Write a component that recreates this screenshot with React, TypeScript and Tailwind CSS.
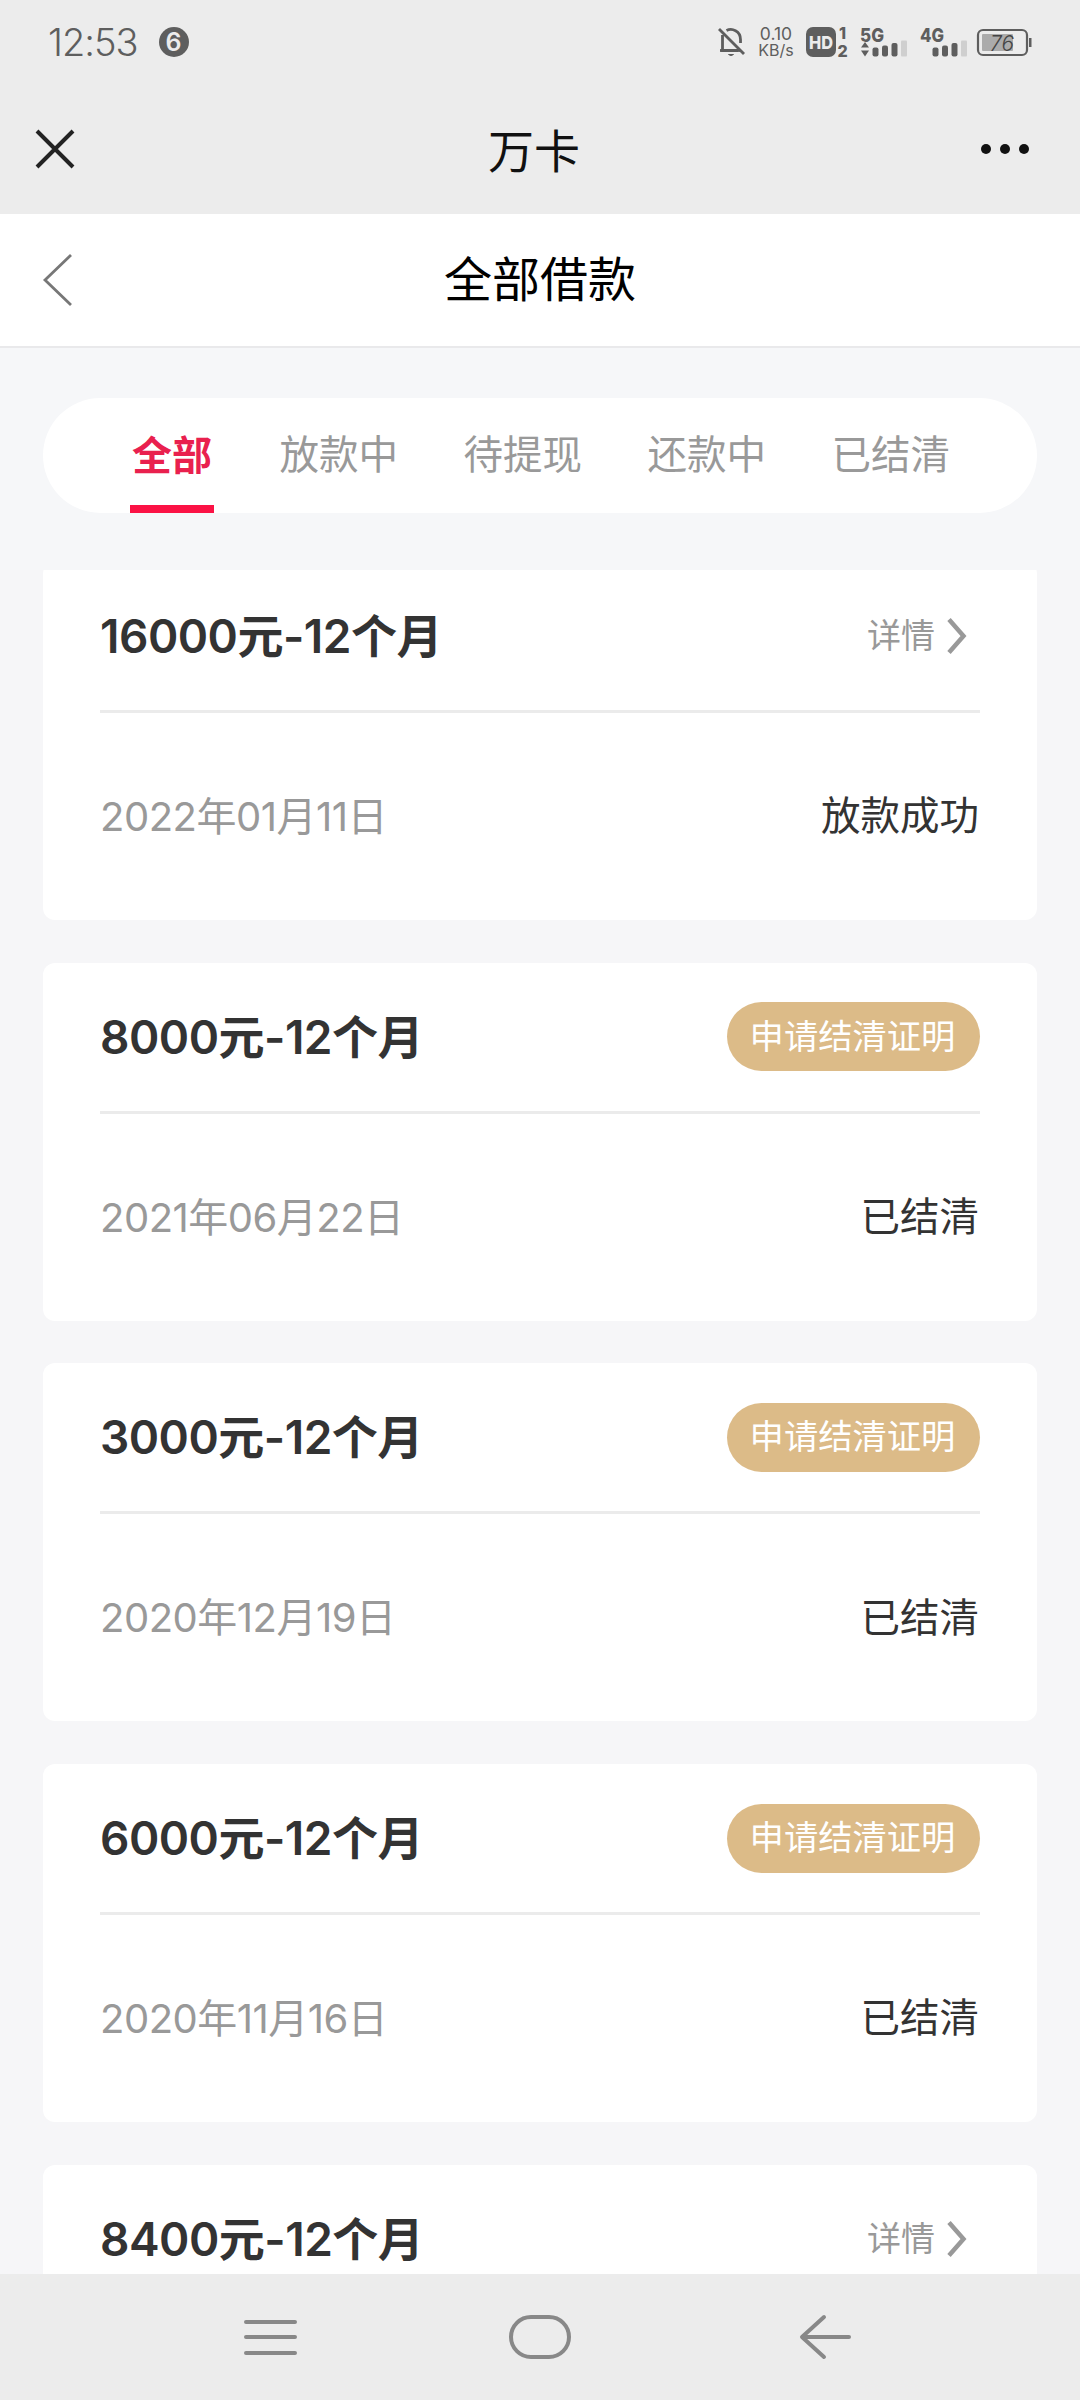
type Loan = {
  title: string;
  date: string;
  status: string;
  action: 'detail' | 'proof';
};

const tabs = ['全部', '放款中', '待提现', '还款中', '已结清'];

const loans: Loan[] = [
  { title: '16000元-12个月', date: '2022年01月11日', status: '放款成功', action: 'detail' },
  { title: '8000元-12个月', date: '2021年06月22日', status: '已结清', action: 'proof' },
  { title: '3000元-12个月', date: '2020年12月19日', status: '已结清', action: 'proof' },
  { title: '6000元-12个月', date: '2020年11月16日', status: '已结清', action: 'proof' },
  { title: '8400元-12个月', date: '', status: '', action: 'detail' },
];

function BellOff() {
  return (
    <svg width="28" height="32" viewBox="0 0 28 32" fill="none" stroke="#5e5e5e" strokeWidth="2.8">
      <path d="M1 3 26 28" />
      <path d="M4.5 9v15.5H20" />
      <path d="M2 24.5h20" />
      <path d="M8.5 4.5C14 1.500 22.500 5 22.500 13.500v3.500" />
      <path d="M10.500 28.500q2.500 2.200 5 0z" fill="#5e5e5e" strokeWidth="1" />
    </svg>
  );
}

function Signal({ label, arrows }: { label: string; arrows?: boolean }) {
  return (
    <svg className="overflow-visible" width="50" height="32" viewBox="0 0 50 32" fill="#5e5e5e">
      <text x="0" y="15.500" fontSize="19" fontWeight="800" textLength="24" lengthAdjust="spacingAndGlyphs">
        {label}
      </text>
      {arrows && (
        <>
          <path d="M1 21.500 5 16l4 5.500z" />
          <path d="M1 24.500h8L5 30.500z" />
        </>
      )}
      <rect x="12.500" y="21.500" width="6" height="9" rx="2" />
      <rect x="22" y="19.500" width="6" height="11" rx="2" />
      <rect x="31.500" y="17" width="6" height="13.500" rx="2" />
      <rect x="41" y="14.500" width="6" height="16" rx="1" fill="#cfcfcf" />
    </svg>
  );
}

function StatusBar() {
  return (
    <div className="flex h-[84px] items-center justify-between pr-[48px] pl-[48px] text-[#5e5e5e]">
      <div className="flex items-center gap-[21px]">
        <span className="text-[38px] leading-none font-light tracking-[-1px]">12:53</span>
        <span className="flex size-[30px] items-center justify-center rounded-full bg-[#5e5e5e] text-[25px] leading-none font-semibold text-[#ececec]">
          6
        </span>
      </div>
      <div className="flex items-center">
        <BellOff />
        <div className="ml-[12px] flex w-[36px] flex-col items-center text-[17.5px] leading-[16px]">
          <span>0.10</span>
          <span className="text-[16px]">KB/s</span>
        </div>
        <svg className="ml-[12px] overflow-visible" width="44" height="32" viewBox="0 0 44 32" fill="#5e5e5e">
          <rect x="0" y="1" width="30" height="30" rx="7" />
          <text x="3" y="22.500" fontSize="18" fontWeight="800" fill="#ececec" textLength="24" lengthAdjust="spacingAndGlyphs">
            HD
          </text>
          <text x="33" y="12.500" fontSize="16" fontWeight="800">1</text>
          <text x="31.500" y="30.500" fontSize="16" fontWeight="800">2</text>
        </svg>
        <div className="ml-[10px]">
          <Signal label="5G" arrows />
        </div>
        <div className="ml-[10px]">
          <Signal label="4G" />
        </div>
        <svg className="ml-[6px] overflow-visible" width="56" height="32" viewBox="0 0 56 32" fill="none">
          <rect x="2" y="4" width="49" height="25" rx="5" stroke="#5e5e5e" strokeWidth="2.200" />
          <rect x="6" y="8" width="31" height="17" rx="1" fill="#ababab" />
          <rect x="53" y="12" width="2.500" height="9" fill="#5e5e5e" />
          <text x="14" y="24.500" fontSize="22" fontStyle="italic" fontWeight="300" fill="#444" textLength="24" lengthAdjust="spacingAndGlyphs">
            76
          </text>
        </svg>
      </div>
    </div>
  );
}

function AppBar() {
  return (
    <div className="grid h-[130px] grid-cols-[1fr_auto_1fr] items-center pr-[46px] pl-[34px]">
      <svg width="42" height="42" viewBox="0 0 42 42" stroke="#222" strokeWidth="4">
        <path d="M3 3 39 39M39 3 3 39" />
      </svg>
      <h1 className="pt-[3px] text-[46px] leading-none text-[#111]">万卡</h1>
      <svg className="justify-self-end" width="54" height="12" viewBox="0 0 54 12" fill="#111">
        <circle cx="6" cy="6" r="5" />
        <circle cx="25" cy="6" r="5" />
        <circle cx="44" cy="6" r="5" />
      </svg>
    </div>
  );
}

function LoanCard({ loan }: { loan: Loan }) {
  return (
    <article className="h-[358px] shrink-0 rounded-xl bg-white px-[57px]">
      <div className="flex h-[151px] items-center justify-between border-b-[3px] border-[#ebebeb]">
        <h3 className="text-[46px] leading-none font-semibold tracking-[-0.5px] text-[#333]">{loan.title}</h3>
        {loan.action === 'proof' ? (
          <button className="h-[69px] w-[253px] rounded-full bg-[#dcbb88] pr-[2px] text-[34.3px] leading-none whitespace-nowrap text-white">
            申请结清证明
          </button>
        ) : (
          <button className="flex items-center gap-[11px] pr-[12px] text-[34px] leading-none text-[#999]">
            详情
            <svg width="22" height="38" viewBox="0 0 22 38" fill="none" stroke="#999" strokeWidth="4.500">
              <path d="M3 2.500 17.500 19 3 35.500" />
            </svg>
          </button>
        )}
      </div>
      <div className="flex h-[206px] items-center justify-between pt-[2px] text-[40px] leading-none">
        <span className="tracking-[-0.5px] text-[#999]">{loan.date}</span>
        <span className="pr-px text-[39.5px] text-[#333]">{loan.status}</span>
      </div>
    </article>
  );
}

export default function App() {
  return (
    <div className="flex h-[2400px] w-[1080px] flex-col overflow-hidden bg-[#f6f7f9] font-[Inter,'Noto_Sans_CJK_SC',sans-serif]">
      <header className="bg-[#ececec]">
        <StatusBar />
        <AppBar />
      </header>

      <div className="grid h-[134px] grid-cols-[1fr_auto_1fr] items-center border-b-2 border-[#e9e9eb] bg-white">
        <svg className="ml-[40px]" width="36" height="56" viewBox="0 0 36 56" fill="none" stroke="#777" strokeWidth="2.800">
          <path d="M31 3 5 28 31 53" />
        </svg>
        <h2 className="text-[48px] leading-none text-black">全部借款</h2>
      </div>

      <nav className="mx-[43px] mt-[50px] flex h-[115px] justify-between rounded-full bg-white pr-[87px] pl-[87px]">
        {tabs.map((tab, i) => (
          <button
            key={tab}
            className={`flex items-center border-y-8 border-t-transparent leading-none ${
              i === 0
                ? 'border-b-[#fb1245] px-[2px] text-[40px] font-bold text-[#e9204e]'
                : 'border-b-transparent text-[39.5px] text-[#999]'
            }`}
          >
            {tab}
          </button>
        ))}
      </nav>

      <main className="mt-[57px] flex min-h-0 flex-1 flex-col justify-start overflow-hidden bg-[#f6f6f8] px-[43px]">
        <div className="-mt-[8px] flex flex-col gap-[42.700px]">
          {loans.map((loan) => (
            <LoanCard key={loan.title} loan={loan} />
          ))}
        </div>
      </main>

      <footer className="flex h-[126px] items-center bg-[#ececec] pl-[242px]">
        <svg width="57" height="44" viewBox="0 0 57 44" stroke="#888" strokeWidth="4" strokeLinecap="round">
          <path d="M4 7h49M4 22h49M4 38h49" />
        </svg>
        <div className="ml-[210px] h-[44px] w-[62px] rounded-[22px] border-4 border-[#888]" />
        <svg className="ml-[227px]" width="56" height="48" viewBox="0 0 56 48" fill="none" stroke="#888" strokeWidth="4" strokeLinecap="round" strokeLinejoin="round">
          <path d="M26 4 4 24l22 20M5 24h46" />
        </svg>
      </footer>
    </div>
  );
}
